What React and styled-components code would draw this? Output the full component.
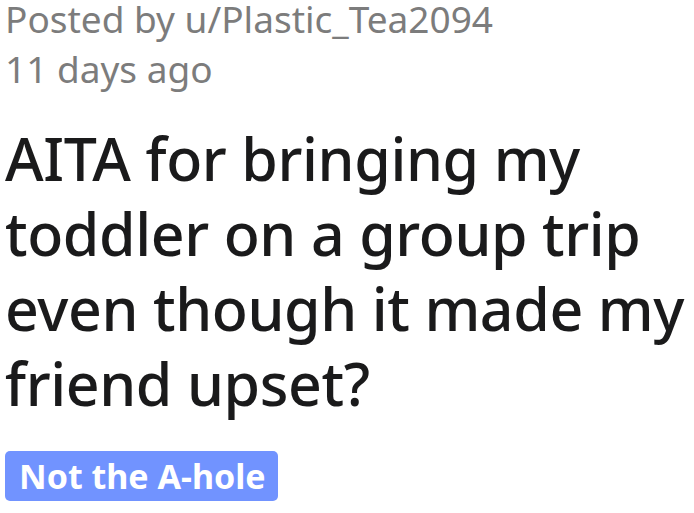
import React from "react";
import styled, { createGlobalStyle } from "styled-components";

const GlobalStyle = createGlobalStyle`
  body {
    margin: 0;
    background: #fff;
    font-family: "Noto Sans", "Open Sans", sans-serif;
  }
`;

const Post = styled.article`
  padding: 0 5px;
`;

const MetaBlock = styled.div`
  display: flex;
  flex-direction: column;
  gap: 12px;
`;

const Meta = styled.div`
  color: #7c7c7c;
  font-size: 37px;
  line-height: 38px;
  white-space: nowrap;
`;

const Title = styled.h1`
  margin: 33px -5px 0 0;
  color: #1a1a1b;
  font-size: 59px;
  font-weight: 500;
  line-height: 75px;
  letter-spacing: -0.4px;
`;

const FlairRow = styled.div`
  display: flex;
  margin-top: 30px;
`;

const Flair = styled.span`
  background: ${(p) => p.color};
  color: #fff;
  font-size: 34px;
  font-weight: 700;
  line-height: 50px;
  padding: 0 12px 0 14px;
  border-radius: 5px;
`;

const App = () => (
  <>
    <GlobalStyle />
    <Post>
      <MetaBlock>
        <Meta>Posted by u/Plastic_Tea2094</Meta>
        <Meta>11 days ago</Meta>
      </MetaBlock>
      <Title>AITA for bringing my toddler on a group trip even though it made my friend upset?</Title>
      <FlairRow>
        <Flair color="#7193ff">Not the A-hole</Flair>
      </FlairRow>
    </Post>
  </>
);

export default App;
